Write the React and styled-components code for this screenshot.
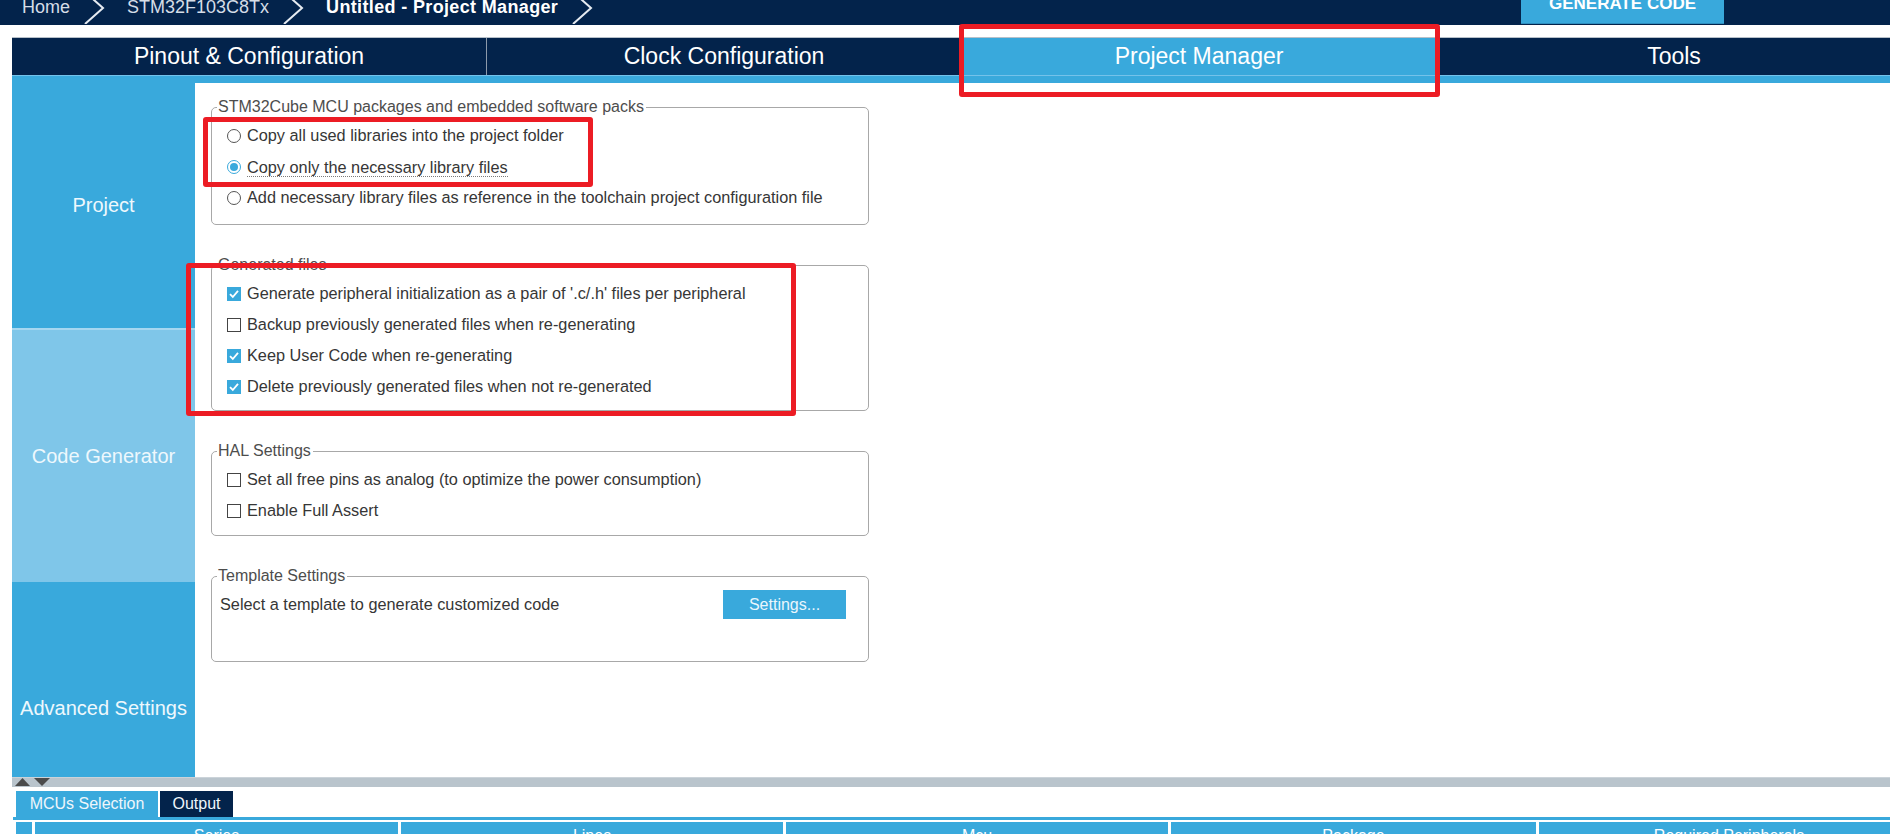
import styled, { createGlobalStyle } from 'styled-components';

const NAVY = '#03234b';
const BLUE = '#39a9dc';
const LIGHT = '#7fc6e9';
const RED = '#ec1c24';

const GlobalStyle = createGlobalStyle`
  *, *::before, *::after { box-sizing: border-box; }
  html, body { margin: 0; padding: 0; background: #fff; }
  body { font-family: "Liberation Sans", Arial, sans-serif; overflow: hidden; }
`;

const Page = styled.div`
  position: relative;
  width: 1890px;
  height: 834px;
  overflow: hidden;
  background: #fff;
`;

// top breadcrumb bar, cut off at the top in the screenshot
const TopBar = styled.header`
  height: 25px;
  background: ${NAVY};
  display: flex;
  align-items: flex-start;
  overflow: hidden;
  padding-left: 22px;
`;

const Crumb = styled.span`
  font-size: 18px;
  line-height: 18px;
  margin-top: -2px;
  white-space: nowrap;
  font-weight: ${(p) => (p.$current ? 700 : 400)};
  letter-spacing: ${(p) => (p.$current ? '0.35px' : '0')};
  color: ${(p) => (p.$current ? '#ffffff' : '#d5dde7')};
`;

const ChevronSvg = styled.svg`
  flex: none;
  margin: -8px 22px 0 14px;
`;

const GenerateButton = styled.div`
  margin-left: auto;
  margin-right: 166px;
  width: 203px;
  height: 24px;
  background: ${BLUE};
  border-bottom: 1px solid #2f8fbf;
  display: flex;
  justify-content: center;
  align-items: flex-start;
  overflow: hidden;

  & > span {
    margin-top: -5px;
    font-size: 17px;
    line-height: 17px;
    font-weight: 700;
    color: #fff;
  }
`;

const TabBar = styled.nav`
  display: flex;
  margin: 12px 0 0 12px;
  height: 38px;
  border-top: 1px solid #b7c0c9;
  background: ${NAVY};
  overflow: hidden;
`;

const Tab = styled.div`
  flex: 0 0 475px;
  display: flex;
  align-items: center;
  justify-content: center;
  font-size: 23px;
  color: #fff;
  background: ${(p) => (p.$active ? BLUE : NAVY)};
  border-right: 1px solid #8d9aab;
`;

const Strip = styled.div`
  margin-left: 12px;
  height: 8px;
  background: ${BLUE};
  border-top: 1px solid #74c2ea;
`;

const Main = styled.div`
  display: flex;
  margin-left: 12px;
  height: 694px;
  overflow: hidden;
`;

const Sidebar = styled.aside`
  flex: 0 0 183px;
  display: flex;
  flex-direction: column;
`;

const SideItem = styled.div`
  flex: 0 0 ${(p) => p.$h}px;
  display: flex;
  align-items: center;
  justify-content: center;
  background: ${(p) => (p.$light ? LIGHT : BLUE)};
  border-bottom: ${(p) => (p.$divider ? '2px solid #a6d7f0' : 'none')};
  color: #eef8fd;
  font-size: 20px;
`;

const Content = styled.section`
  flex: 1;
  display: flex;
  flex-direction: column;
  align-items: flex-start;
  gap: 30px;
  padding: 14px 0 0 16px;
`;

const Group = styled.fieldset`
  width: 658px;
  margin: 0;
  border: 1px solid #a8a8a8;
  border-radius: 5px;
  padding: 3px 0 ${(p) => p.$pb}px 15px;
  min-width: 0;
`;

const Legend = styled.legend`
  font-size: 16px;
  line-height: 20px;
  color: #4d4d4d;
  padding: 0 2px 0 1px;
  margin-left: -10px;
`;

const Option = styled.div`
  display: flex;
  align-items: center;
  gap: 6px;
  height: 31px;
  font-size: 16.3px;
  color: #363636;
  white-space: nowrap;
`;

const Label = styled.span`
  border-bottom: 1px dotted ${(p) => (p.$focused ? '#7a7a7a' : 'transparent')};
  line-height: 18px;
  margin-top: ${(p) => (p.$focused ? '2px' : '0')};
`;

const Radio = styled.span`
  flex: none;
  width: 14px;
  height: 14px;
  border-radius: 50%;
  border: 1px solid ${(p) => (p.$checked ? BLUE : '#555')};
  background: #fff;
  display: flex;
  align-items: center;
  justify-content: center;

  &::after {
    content: '';
    width: 8px;
    height: 8px;
    border-radius: 50%;
    background: ${(p) => (p.$checked ? BLUE : 'transparent')};
  }
`;

const Box = styled.span`
  flex: none;
  width: 14px;
  height: 14px;
  border: 1px solid ${(p) => (p.$checked ? BLUE : '#444')};
  background: ${(p) => (p.$checked ? BLUE : '#fff')};
  display: flex;
  align-items: center;
  justify-content: center;
`;

const TemplateRow = styled.div`
  display: flex;
  align-items: center;
  height: 31px;
  margin-left: -7px;
  font-size: 16.3px;
  color: #363636;
`;

const SettingsButton = styled.div`
  margin-left: auto;
  margin-right: 22px;
  width: 123px;
  height: 29px;
  background: ${BLUE};
  color: #eaf6fc;
  font-size: 16px;
  display: flex;
  align-items: center;
  justify-content: center;
`;

const Splitter = styled.div`
  margin-left: 12px;
  height: 10px;
  background: #b9c4cc;
  border-top: 1px solid #cbd3d9;
  padding-left: 3px;
  display: flex;
  align-items: center;
`;

const BottomTabs = styled.div`
  display: flex;
  gap: 2px;
  margin: 4px 0 0 12px;
  padding-left: 4px;
  height: 26px;
`;

const BottomTab = styled.div`
  width: ${(p) => p.$w}px;
  display: flex;
  align-items: center;
  justify-content: center;
  font-size: 16px;
  color: #eef6fb;
  background: ${(p) => (p.$active ? BLUE : NAVY)};
`;

const BlueLine = styled.div`
  margin: 0 0 2px 13px;
  height: 3px;
  background: ${BLUE};
`;

const HeaderRow = styled.div`
  display: flex;
  gap: 3px;
  margin-left: 13px;
  padding-left: 3px;
  height: 30px;
`;

const HeaderCell = styled.div`
  flex: 0 0 ${(p) => p.$w}px;
  background: ${BLUE};
  color: #fff;
  font-size: 16px;
  text-align: center;
  padding-top: 5px;
`;

// red annotation frames drawn over the screenshot
const Mark = styled.div`
  position: absolute;
  left: ${(p) => p.$x}px;
  top: ${(p) => p.$y}px;
  width: ${(p) => p.$w}px;
  height: ${(p) => p.$h}px;
  border: 5px solid ${RED};
  border-radius: 3px;
  pointer-events: none;
`;

function Chevron() {
  return (
    <ChevronSvg width="21" height="32" viewBox="0 0 21 32">
      <polyline points="1,0 19,16 1,32" fill="none" stroke="#e6ebf1" strokeWidth="2" />
    </ChevronSvg>
  );
}

function CheckMark() {
  return (
    <svg width="12" height="12" viewBox="0 0 12 12">
      <polyline points="2,6.2 4.8,9 10,2.8" fill="none" stroke="#fff" strokeWidth="1.8" />
    </svg>
  );
}

function RadioOption({ checked, focused, children }) {
  return (
    <Option>
      <Radio $checked={checked} />
      <Label $focused={focused}>{children}</Label>
    </Option>
  );
}

function CheckOption({ checked, children }) {
  return (
    <Option>
      <Box $checked={checked}>{checked && <CheckMark />}</Box>
      <Label>{children}</Label>
    </Option>
  );
}

const headers = [
  { w: 16, label: '' },
  { w: 363, label: 'Series' },
  { w: 382, label: 'Lines' },
  { w: 382, label: 'Mcu' },
  { w: 365, label: 'Package' },
  { w: 380, label: 'Required Peripherals' },
];

export default function App() {
  return (
    <Page>
      <GlobalStyle />
      <TopBar>
        <Crumb>Home</Crumb>
        <Chevron />
        <Crumb>STM32F103C8Tx</Crumb>
        <Chevron />
        <Crumb $current>Untitled - Project Manager</Crumb>
        <Chevron />
        <GenerateButton>
          <span>GENERATE CODE</span>
        </GenerateButton>
      </TopBar>

      <TabBar>
        <Tab>Pinout &amp; Configuration</Tab>
        <Tab>Clock Configuration</Tab>
        <Tab $active>Project Manager</Tab>
        <Tab>Tools</Tab>
      </TabBar>
      <Strip />

      <Main>
        <Sidebar>
          <SideItem $h={247} $divider>Project</SideItem>
          <SideItem $h={252} $light>Code Generator</SideItem>
          <SideItem $h={252}>Advanced Settings</SideItem>
        </Sidebar>

        <Content>
          <Group $pb={11}>
            <Legend>STM32Cube MCU packages and embedded software packs</Legend>
            <RadioOption>Copy all used libraries into the project folder</RadioOption>
            <RadioOption checked focused>Copy only the necessary library files</RadioOption>
            <RadioOption>Add necessary library files as reference in the toolchain project configuration file</RadioOption>
          </Group>

          <Group $pb={8}>
            <Legend>Generated files</Legend>
            <CheckOption checked>Generate peripheral initialization as a pair of '.c/.h' files per peripheral</CheckOption>
            <CheckOption>Backup previously generated files when re-generating</CheckOption>
            <CheckOption checked>Keep User Code when re-generating</CheckOption>
            <CheckOption checked>Delete previously generated files when not re-generated</CheckOption>
          </Group>

          <Group $pb={9}>
            <Legend>HAL Settings</Legend>
            <CheckOption>Set all free pins as analog (to optimize the power consumption)</CheckOption>
            <CheckOption>Enable Full Assert</CheckOption>
          </Group>

          <Group $pb={41}>
            <Legend>Template Settings</Legend>
            <TemplateRow>
              Select a template to generate customized code
              <SettingsButton>Settings...</SettingsButton>
            </TemplateRow>
          </Group>
        </Content>
      </Main>

      <Splitter>
        <svg width="36" height="9" viewBox="0 0 36 9">
          <polygon points="0,8 7.5,0 15,8" fill="#4b4b4b" />
          <polygon points="19,0 35,0 27,8" fill="#4b4b4b" />
        </svg>
      </Splitter>

      <BottomTabs>
        <BottomTab $w={142} $active>MCUs Selection</BottomTab>
        <BottomTab $w={73}>Output</BottomTab>
      </BottomTabs>
      <BlueLine />
      <HeaderRow>
        {headers.map((h, i) => (
          <HeaderCell key={i} $w={h.w}>{h.label}</HeaderCell>
        ))}
      </HeaderRow>

      <Mark $x={959} $y={24} $w={481} $h={73} />
      <Mark $x={203} $y={117} $w={390} $h={70} />
      <Mark $x={186} $y={263} $w={610} $h={153} />
    </Page>
  );
}
